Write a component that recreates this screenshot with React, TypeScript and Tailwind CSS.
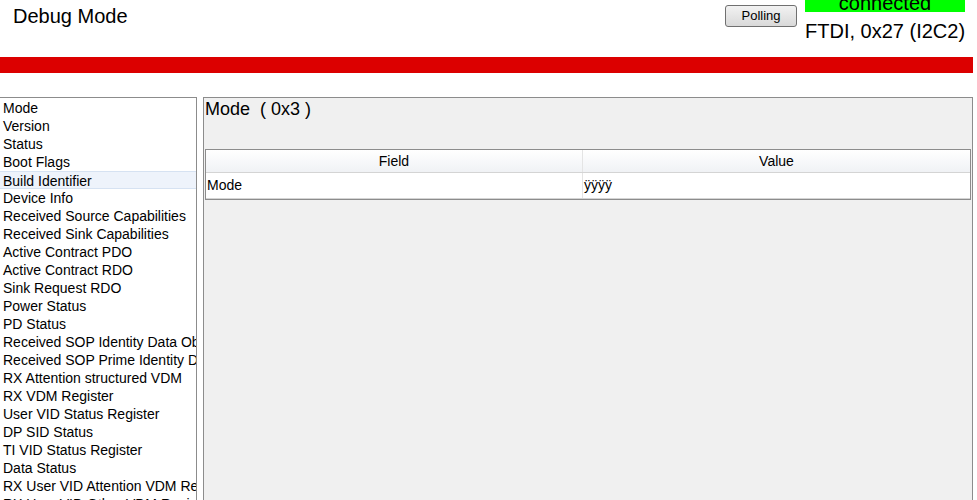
import React from "react";

const items = [
  "Mode",
  "Version",
  "Status",
  "Boot Flags",
  "Build Identifier",
  "Device Info",
  "Received Source Capabilities",
  "Received Sink Capabilities",
  "Active Contract PDO",
  "Active Contract RDO",
  "Sink Request RDO",
  "Power Status",
  "PD Status",
  "Received SOP Identity Data Object",
  "Received SOP Prime Identity Data Object",
  "RX Attention structured VDM",
  "RX VDM Register",
  "User VID Status Register",
  "DP SID Status",
  "TI VID Status Register",
  "Data Status",
  "RX User VID Attention VDM Register",
  "RX User VID Other VDM Register",
];

export default function App() {
  return (
    <div className="w-[977px] h-[500px] overflow-hidden bg-white font-['Liberation_Sans',Arial,sans-serif] text-black">
      {/* Header */}
      <header className="h-[57px] flex justify-between">
        <h1 className="pl-[13px] pt-[5px] text-[20px] leading-[22px]">Debug Mode</h1>
        <div className="flex pr-[12px]">
          <button className="mt-[5px] mr-[8px] h-[22px] w-[72px] rounded-[3px] border border-[#707070] bg-gradient-to-b from-[#f2f2f2] to-[#d9d9d9] text-[13px] leading-[20px]">
            Polling
          </button>
          <div className="w-[160px] flex flex-col">
            <div className="h-[12px] bg-[#00ff00] overflow-hidden flex justify-center">
              <span className="text-[20px] leading-[12px] -mt-[3px]">connected</span>
            </div>
            <div className="mt-[8px] text-[20px] leading-[22px] whitespace-nowrap">FTDI, 0x27 (I2C2)</div>
          </div>
        </div>
      </header>

      {/* Red bar */}
      <div className="h-[16px] w-[973px] bg-[#dc0000]" />

      {/* Main */}
      <div className="mt-[24px] flex gap-[6px]">
        <div className="-ml-px w-[198px] h-[410px] border border-[#8c8c8c] bg-white overflow-hidden pt-px">
          {items.map((t) => (
            <div
              key={t}
              className={`h-[18px] pl-[3px] text-[14px] leading-[18px] whitespace-nowrap overflow-hidden ${
                t === "Build Identifier" ? "bg-[#eef3fb] border-y border-[#d6e2f2] leading-[16px]" : ""
              }`}
            >
              {t}
            </div>
          ))}
        </div>

        <div className="w-[770px] h-[410px] border border-[#8c8c8c] bg-[#f0f0f0]">
          <div className="h-[51px] pl-[1px] pt-px text-[18px] leading-[20px]">Mode&nbsp;&nbsp;( 0x3 )</div>
          <div className="border border-[#8c8c8c] bg-white ml-px mr-px">
            <div className="flex h-[23px] border-b border-[#d4d4d4] bg-gradient-to-b from-white to-[#f0f2f5] text-[14px] leading-[22px]">
              <div className="w-[377px] text-center border-r border-[#e4e4e4]">Field</div>
              <div className="flex-1 text-center">Value</div>
            </div>
            <div className="flex h-[26px] border-b border-[#d4d4d4] text-[14px] leading-[25px]">
              <div className="w-[377px] pl-[1px] border-r border-[#e4e4e4]">Mode</div>
              <div className="flex-1 pl-[1px]">ÿÿÿÿ</div>
            </div>
          </div>
        </div>
      </div>
    </div>
  );
}
